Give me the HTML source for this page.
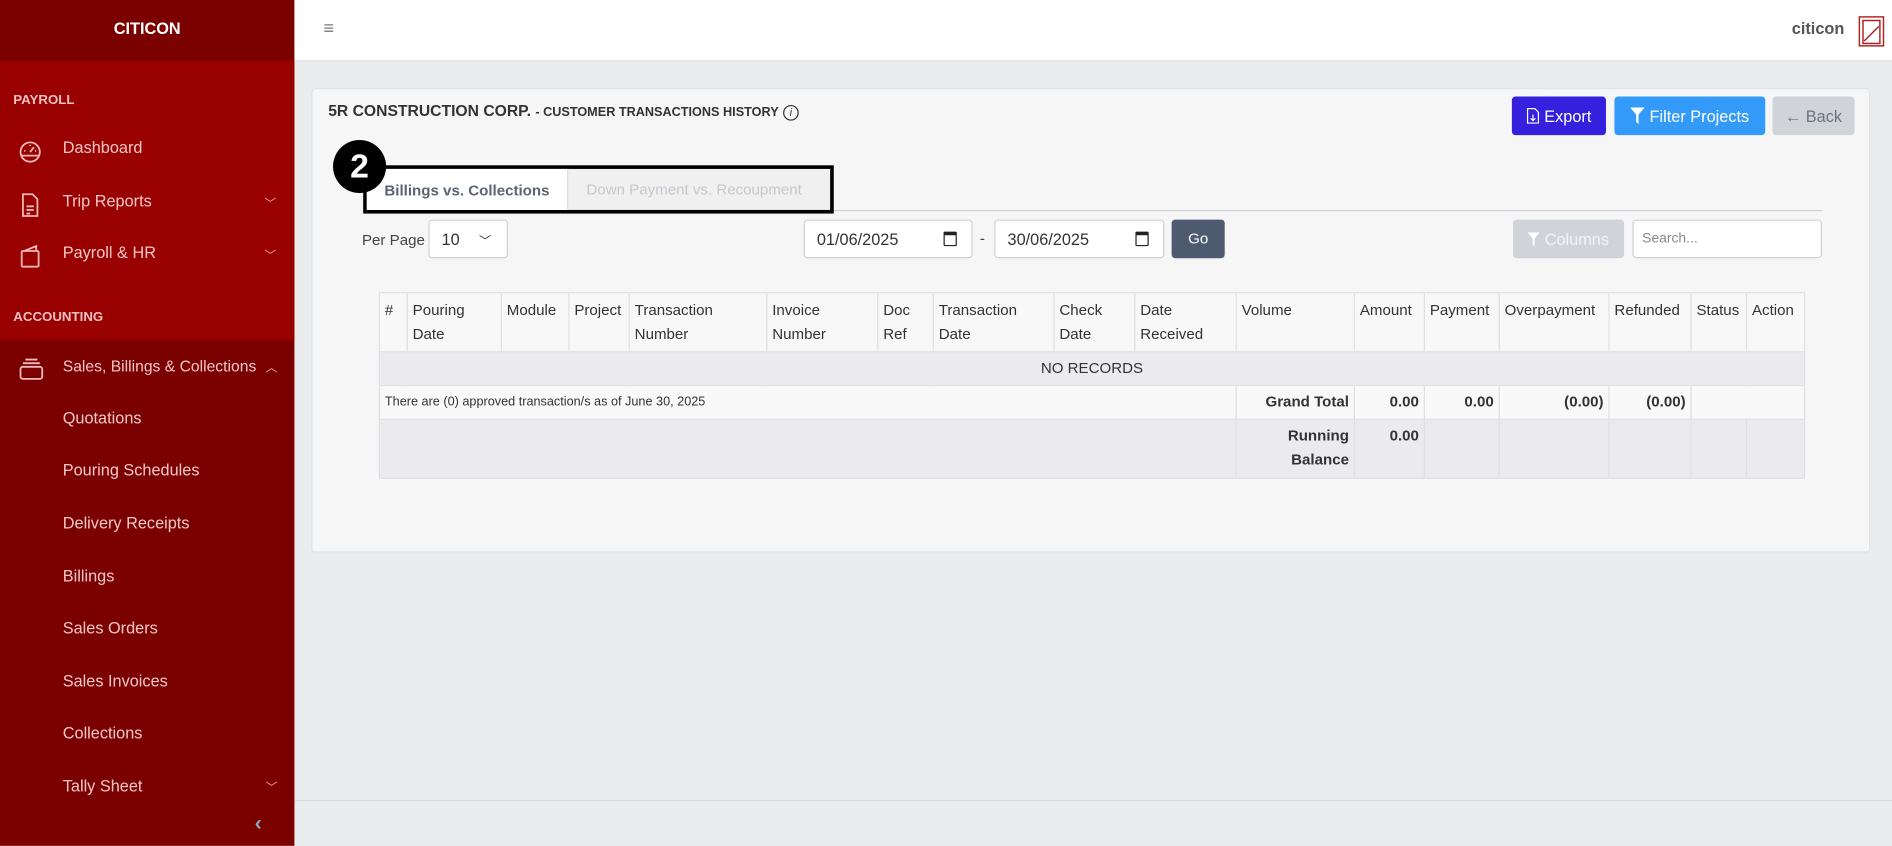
<!DOCTYPE html>
<html><head><meta charset="utf-8"><style>
*{box-sizing:border-box;margin:0;padding:0}
html,body{width:1892px;height:845px;overflow:hidden;background:#ebecee}
#w{position:absolute;left:0;top:0;width:1568px;height:700.3px;transform:scale(1.2066);transform-origin:0 0;font-family:"Liberation Sans",sans-serif;font-size:13px;color:#333}
.a{position:absolute}
.sb{left:0;top:0;width:244px;height:701px;background:#7b0000}
.sbt{left:0;top:50px;width:244px;height:232px;background:#990000}
.st{color:#f3c6c6;font-size:13.5px}
.sec{color:#f0c0c0;font-weight:bold;font-size:11px}
.chev{color:#e8a0a0;font-size:10px}
th,td{border:1px solid #dee0e4;font-size:12.5px;padding:4px 4px;vertical-align:top;text-align:left;font-weight:normal;color:#333;line-height:20px;white-space:nowrap}
table{border-collapse:collapse;position:absolute;left:314px;top:242px;width:1182px;background:#f8f8f9;table-layout:fixed}
.btn{position:absolute;border-radius:3px;color:#fff;font-size:13.5px;display:flex;align-items:center;justify-content:center}
.inp{position:absolute;background:#fff;border:1px solid #ced1d6;border-radius:3px;font-size:13.5px;display:flex;align-items:center;padding-left:10px}
.cal{position:absolute;right:12px;top:9px;width:11px;height:12px;border:1.5px solid #222;border-top-width:3px;border-radius:1px}
</style></head><body><div id="w">
<div class="a sb"></div><div class="a sbt"></div>
<div class="a" style="left:0;top:0;width:244px;height:50px;background:#7b0000;color:#fff;font-weight:bold;font-size:13.5px;text-align:center;line-height:48px">CITICON</div>
<div class="a sec" style="left:11px;top:77px">PAYROLL</div>
<svg class="a" style="left:15px;top:116px" width="20" height="20" viewBox="0 0 20 20" fill="none" stroke="#f0b8b8" stroke-width="1.5"><circle cx="10" cy="10" r="8"/><path d="M10 10l3-4M5 9h1M14 9h1M10 4v1"/><path d="M3 13h14" /></svg>
<div class="a st" style="left:52px;top:115px">Dashboard</div>
<svg class="a" style="left:17px;top:160px" width="16" height="20" viewBox="0 0 16 20" fill="none" stroke="#f0b8b8" stroke-width="1.5"><path d="M2 1h8l4 4v14H2z"/><path d="M5 11h6M5 14h6M5 17h3"/></svg>
<div class="a st" style="left:52px;top:159px">Trip Reports</div><div class="a chev" style="left:219px;top:160px">﹀</div>
<svg class="a" style="left:16px;top:202px" width="20" height="20" viewBox="0 0 20 20" fill="none" stroke="#f0b8b8" stroke-width="1.5"><rect x="2" y="6" width="14" height="13" rx="1"/><path d="M4 6l10-4v4"/></svg>
<div class="a st" style="left:52px;top:202px">Payroll &amp; HR</div><div class="a chev" style="left:219px;top:203px">﹀</div>
<div class="a sec" style="left:11px;top:257px">ACCOUNTING</div>
<svg class="a" style="left:15px;top:296px" width="22" height="20" viewBox="0 0 22 20" fill="none" stroke="#f0b8b8" stroke-width="1.5"><rect x="2" y="8" width="18" height="10" rx="2"/><path d="M4 5h14M6 2h10"/></svg>
<div class="a st" style="left:52px;top:296px;font-size:13px">Sales, Billings &amp; Collections</div><div class="a chev" style="left:220px;top:296px">︿</div>
<div class="a st" style="left:52px;top:339px">Quotations</div>
<div class="a st" style="left:52px;top:382px">Pouring Schedules</div>
<div class="a st" style="left:52px;top:426px">Delivery Receipts</div>
<div class="a st" style="left:52px;top:470px">Billings</div>
<div class="a st" style="left:52px;top:513px">Sales Orders</div>
<div class="a st" style="left:52px;top:557px">Sales Invoices</div>
<div class="a st" style="left:52px;top:600px">Collections</div>
<div class="a st" style="left:52px;top:644px">Tally Sheet</div><div class="a chev" style="left:220px;top:644px">﹀</div>
<div class="a" style="left:211px;top:672px;color:#8fa3b8;font-weight:bold;font-size:18px">‹</div>
<!-- header -->
<div class="a" style="left:244px;top:0;width:1324px;height:51px;background:#fff;border-bottom:1px solid #d8dade"></div>
<div class="a" style="left:268px;top:15px;color:#777;font-size:15px">≡</div>
<div class="a" style="left:1485px;top:16px;color:#555;font-weight:bold;font-size:13.5px">citicon</div>
<svg class="a" style="left:1540px;top:13px" width="22" height="26" viewBox="0 0 22 26" fill="none" stroke="#b02020" stroke-width="1.2"><rect x="1" y="1" width="20" height="24"/><rect x="4" y="4" width="14" height="19"/><path d="M5 21l12-12"/></svg>
<div class="a" style="left:244px;top:663px;width:1324px;height:1px;background:#d8dade"></div>
<!-- card -->
<div class="a" style="left:258px;top:73px;width:1292px;height:385px;background:#f6f6f7;border:1px solid #dfe1e4;border-radius:3px"></div>
<div class="a" style="left:272px;top:84px;font-weight:bold;font-size:13px;color:#333">5R CONSTRUCTION CORP. <span style="font-size:10.5px">- CUSTOMER TRANSACTIONS HISTORY</span> <span style="display:inline-block;width:13px;height:13px;border:1px solid #333;border-radius:50%;font-size:9px;text-align:center;line-height:11px;font-style:italic;font-weight:normal">i</span></div>
<div class="btn" style="left:1253px;top:80px;width:78px;height:32px;background:#3520dd"><svg width="11" height="14" viewBox="0 0 11 14" fill="none" stroke="#fff" stroke-width="1"><path d="M1 1h6l3 3v9H1z"/><path d="M5.5 6v5M3.5 9l2 2 2-2"/></svg>&nbsp;Export</div>
<div class="btn" style="left:1338px;top:80px;width:125px;height:32px;background:#339afa"><svg width="12" height="14" viewBox="0 0 12 14"><path d="M0 0h12L7 6v8L5 12V6z" fill="#fff"/></svg>&nbsp;Filter Projects</div>
<div class="btn" style="left:1469px;top:80px;width:68px;height:32px;background:#d0d3d8;color:#6a7482">← Back</div>
<!-- tabs -->
<div class="a" style="left:306px;top:174px;width:1204px;height:1px;background:#d0d2d6"></div>
<div class="a" style="left:301px;top:137px;width:390px;height:40px;border:3px solid #000;background:#f0f0f1"></div>
<div class="a" style="left:304px;top:140px;width:167px;height:34px;background:#fff;border-right:1px solid #ddd;color:#5a6472;font-weight:bold;font-size:12.5px;line-height:36px;text-align:center">Billings vs. Collections</div>
<div class="a" style="left:486px;top:150px;color:#c4c7cc;font-size:12.5px">Down Payment vs. Recoupment</div>
<div class="a" style="left:276px;top:116px;width:44px;height:44px;border-radius:50%;background:#000;color:#fff;font-weight:bold;font-size:28px;text-align:center;line-height:44px">2</div>
<!-- controls -->
<div class="a" style="left:300px;top:192px;color:#444;font-size:12.5px">Per Page</div>
<div class="inp" style="left:355px;top:182px;width:66px;height:32px">10 <span style="margin-left:16px;font-size:10px">﹀</span></div>
<div class="inp" style="left:666px;top:182px;width:140px;height:32px">01/06/2025<div class="cal"></div></div>
<div class="a" style="left:812px;top:190px;color:#444">-</div>
<div class="inp" style="left:824px;top:182px;width:141px;height:32px">30/06/2025<div class="cal"></div></div>
<div class="btn" style="left:971px;top:182px;width:44px;height:32px;background:#4d5a70;font-size:12.5px">Go</div>
<div class="btn" style="left:1254px;top:182px;width:92px;height:32px;background:#d0d3d8;color:#f4f4f6"><svg width="10" height="13" viewBox="0 0 12 14"><path d="M0 0h12L7 6v8L5 12V6z" fill="#fff"/></svg>&nbsp;Columns</div>
<div class="inp" style="left:1353px;top:182px;width:157px;height:32px;color:#888;font-size:11.5px;padding-left:7px">Search...</div>
<table>
<colgroup><col style="width:23px"><col style="width:78px"><col style="width:56px"><col style="width:50px"><col style="width:114px"><col style="width:92px"><col style="width:46px"><col style="width:100px"><col style="width:67px"><col style="width:84px"><col style="width:98px"><col style="width:58px"><col style="width:62px"><col style="width:91px"><col style="width:68px"><col style="width:46px"><col style="width:48px"></colgroup>
<tr style="height:49px"><th>#</th><th>Pouring<br>Date</th><th>Module</th><th>Project</th><th>Transaction<br>Number</th><th>Invoice<br>Number</th><th>Doc<br>Ref</th><th>Transaction<br>Date</th><th>Check<br>Date</th><th>Date<br>Received</th><th>Volume</th><th>Amount</th><th>Payment</th><th>Overpayment</th><th>Refunded</th><th>Status</th><th>Action</th></tr>
<tr style="height:28px;background:#ebebed"><td colspan="17" style="text-align:center;padding:3px">NO RECORDS</td></tr>
<tr style="height:28px;background:#f9f9fa"><td colspan="10" style="font-size:10.5px;padding:3px 4px">There are (0) approved transaction/s as of June 30, 2025</td><td style="text-align:right;font-weight:bold;padding:3px 4px">Grand Total</td><td style="text-align:right;font-weight:bold;padding:3px 4px">0.00</td><td style="text-align:right;font-weight:bold;padding:3px 4px">0.00</td><td style="text-align:right;font-weight:bold;padding:3px 4px">(0.00)</td><td style="text-align:right;font-weight:bold;padding:3px 4px">(0.00)</td><td colspan="2"></td></tr>
<tr style="height:49px;background:#ebebed"><td colspan="10"></td><td style="text-align:right;font-weight:bold;padding:3px 4px">Running<br>Balance</td><td style="text-align:right;font-weight:bold;padding:3px 4px">0.00</td><td></td><td></td><td></td><td></td><td></td></tr>
</table>
</div></body></html>
